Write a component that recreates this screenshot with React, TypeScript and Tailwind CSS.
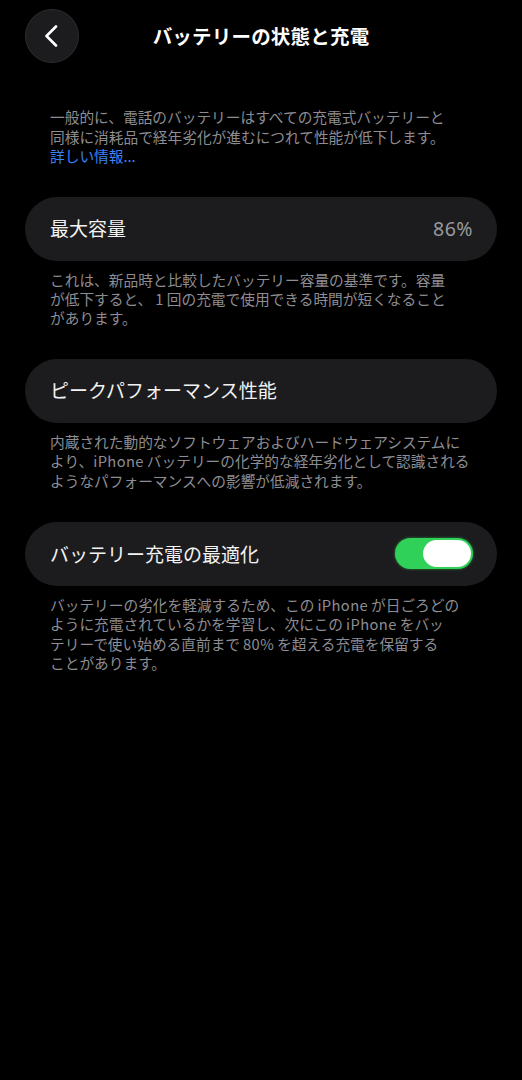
import { ReactNode } from "react";

const font = { fontFamily: '"Noto Sans CJK JP", "Noto Sans", sans-serif' };

function Note({ children }: { children: ReactNode }) {
  return (
    <p className="mt-[9px] px-[25px] text-[14.7px] leading-[19.4px] text-[#8d8d93]">
      {children}
    </p>
  );
}

// Latin words sit slightly apart from the kana around them
function Latin({ children, gap = true }: { children: ReactNode; gap?: boolean }) {
  return (
    <span className={gap ? "mx-[3px] tracking-[0.4px]" : "tracking-[0.4px]"}>{children}</span>
  );
}

function Row({ children }: { children: ReactNode }) {
  return (
    <div className="flex h-[64px] items-center justify-between rounded-full bg-[#1c1c1e] pl-[25px] pr-[24px]">
      {children}
    </div>
  );
}

function Toggle() {
  return (
    <div className="flex h-[31px] w-[78px] items-center justify-end rounded-full bg-[#30d158] pr-[2px] shadow-[0_0_3px_rgba(48,209,88,0.6)]">
      <div className="h-[27px] w-[48px] rounded-full bg-white" />
    </div>
  );
}

export default function App() {
  return (
    <div className="min-h-[1080px] w-full bg-black text-white" style={font}>
      {/* Header */}
      <div className="relative flex h-[72px] items-center justify-center">
        <button className="absolute left-[25px] top-[9px] flex h-[54px] w-[54px] items-center justify-center rounded-full border border-[#2c2c2e] bg-[#1c1c1e]">
          <svg width="18" height="22" viewBox="0 0 18 22" fill="none">
            <path d="M13 1.5 L3.5 11 L13 20.5" stroke="white" strokeWidth="2.6" strokeLinecap="round" strokeLinejoin="round" />
          </svg>
        </button>
        <h1 className="text-[19.5px] font-bold tracking-[0.2px]">バッテリーの状態と充電</h1>
      </div>

      <div className="px-[25px]">
        <p className="mt-[35px] px-[25px] text-[14.7px] leading-[19.5px] text-[#8d8d93]">
          一般的に、電話のバッテリーはすべての充電式バッテリーと
          <br />
          同様に消耗品で経年劣化が進むにつれて性能が低下します。
          <br />
          <span className="text-[#3b82f6]">詳しい情報...</span>
        </p>

        <div className="mt-[31px]">
          <Row>
            <span className="text-[19px] text-[#f2f2f2]">最大容量</span>
            <span className="text-[19.5px] tracking-[0.5px] text-[#98989d]" style={{ fontFamily: '"Noto Sans", sans-serif' }}>86%</span>
          </Row>
          <Note>
            これは、新品時と比較したバッテリー容量の基準です。容量
            <br />
            が低下すると、<Latin>1</Latin>回の充電で使用できる時間が短くなること
            <br />
            があります。
          </Note>
        </div>

        <div className="mt-[31px]">
          <Row>
            <span className="text-[19px] text-[#f2f2f2]">ピークパフォーマンス性能</span>
          </Row>
          <Note>
            内蔵された動的なソフトウェアおよびハードウェアシステムに
            <br />
            より、<Latin gap={false}>iPhone</Latin>
            <span className="ml-[3px]">バッテリーの化学的な経年劣化として認識される</span>
            <br />
            ようなパフォーマンスへの影響が低減されます。
          </Note>
        </div>

        <div className="mt-[32px]">
          <Row>
            <span className="text-[19px] text-[#f2f2f2]">バッテリー充電の最適化</span>
            <Toggle />
          </Row>
          <Note>
            バッテリーの劣化を軽減するため、この<Latin>iPhone</Latin>が日ごろどの
            <br />
            ように充電されているかを学習し、次にこの<Latin>iPhone</Latin>をバッ
            <br />
            テリーで使い始める直前まで<Latin>80%</Latin>を超える充電を保留する
            <br />
            ことがあります。
          </Note>
        </div>
      </div>
    </div>
  );
}
